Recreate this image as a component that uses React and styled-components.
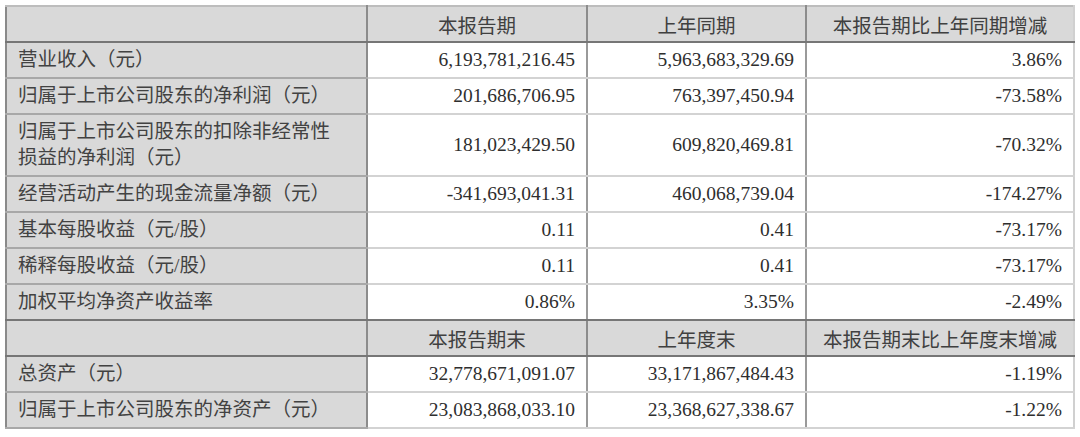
import React from "react";
import styled, { createGlobalStyle } from "styled-components";

const Global = createGlobalStyle`
  html, body { margin: 0; padding: 0; background: #ffffff; }
  body { width: 1080px; height: 437px; overflow: hidden; }
`;

const Wrap = styled.div`
  padding: 5px 0 0 5px;
`;

const Table = styled.table`
  border-collapse: collapse;
  table-layout: fixed;
  width: 1068px;
  font-family: "Liberation Serif", "Noto Sans CJK SC", serif;
  font-size: 19.5px;
  color: #2e2e2e;
  border-left: 2px solid #8a8a8a;
  border-top: 2px solid #bdbdbd;
  border-right: 2px solid #d0d0d0;
  border-bottom: 2px solid #c4c4c4;
`;

const Col = styled.col`
  width: ${(p) => p.$w}px;
`;

const Row = styled.tr`
  height: ${(p) => (p.$tall ? 62 : 36)}px;
`;

const HeadCell = styled.td`
  background: #d9d9d9;
  color: #404040;
  text-align: center;
  padding: 0 10px;
  border-right: 2px solid #8c8c8c;
  border-bottom: 2px solid #767676;
  white-space: nowrap;
  &:last-child { border-right: none; }
`;

const Label = styled.td`
  background: #d9d9d9;
  color: #424242;
  text-align: left;
  padding: 4px 10px 4px 11px;
  line-height: 26px;
  border-right: 2px solid #8c8c8c;
  border-bottom: 2px solid ${(p) => (p.$dark ? "#767676" : "#a8a8a8")};
`;

const Num = styled.td`
  text-align: right;
  padding: 0 11px 0 10px;
  border-right: 2px solid #9a9a9a;
  border-bottom: 2px solid ${(p) => (p.$dark ? "#767676" : "#d3d3d3")};
  white-space: nowrap;
  &:last-child { border-right: none; }
`;

const rows1 = [
  ["营业收入（元）", "6,193,781,216.45", "5,963,683,329.69", "3.86%"],
  ["归属于上市公司股东的净利润（元）", "201,686,706.95", "763,397,450.94", "-73.58%"],
  ["归属于上市公司股东的扣除非经常性\n损益的净利润（元）", "181,023,429.50", "609,820,469.81", "-70.32%", true],
  ["经营活动产生的现金流量净额（元）", "-341,693,041.31", "460,068,739.04", "-174.27%"],
  ["基本每股收益（元/股）", "0.11", "0.41", "-73.17%"],
  ["稀释每股收益（元/股）", "0.11", "0.41", "-73.17%"],
  ["加权平均净资产收益率", "0.86%", "3.35%", "-2.49%"],
];

const rows2 = [
  ["总资产（元）", "32,778,671,091.07", "33,171,867,484.43", "-1.19%"],
  ["归属于上市公司股东的净资产（元）", "23,083,868,033.10", "23,368,627,338.67", "-1.22%"],
];

function DataRow({ r, dark }) {
  const [label, a, b, c, tall] = r;
  return (
    <Row $tall={tall}>
      <Label $dark={dark}>
        {label.split("\n").map((l, i) => (
          <React.Fragment key={i}>
            {i > 0 && <br />}
            {l}
          </React.Fragment>
        ))}
      </Label>
      <Num $dark={dark}>{a}</Num>
      <Num $dark={dark}>{b}</Num>
      <Num $dark={dark}>{c}</Num>
    </Row>
  );
}

export default function App() {
  return (
    <>
      <Global />
      <Wrap>
        <Table>
          <colgroup>
            <Col $w={361} />
            <Col $w={220} />
            <Col $w={219} />
            <Col $w={268} />
          </colgroup>
          <tbody>
            <Row>
              <HeadCell />
              <HeadCell>本报告期</HeadCell>
              <HeadCell>上年同期</HeadCell>
              <HeadCell>本报告期比上年同期增减</HeadCell>
            </Row>
            {rows1.map((r, i) => (
              <DataRow key={i} r={r} dark={i === rows1.length - 1} />
            ))}
            <Row>
              <HeadCell />
              <HeadCell>本报告期末</HeadCell>
              <HeadCell>上年度末</HeadCell>
              <HeadCell>本报告期末比上年度末增减</HeadCell>
            </Row>
            {rows2.map((r, i) => (
              <DataRow key={i} r={r} />
            ))}
          </tbody>
        </Table>
      </Wrap>
    </>
  );
}
